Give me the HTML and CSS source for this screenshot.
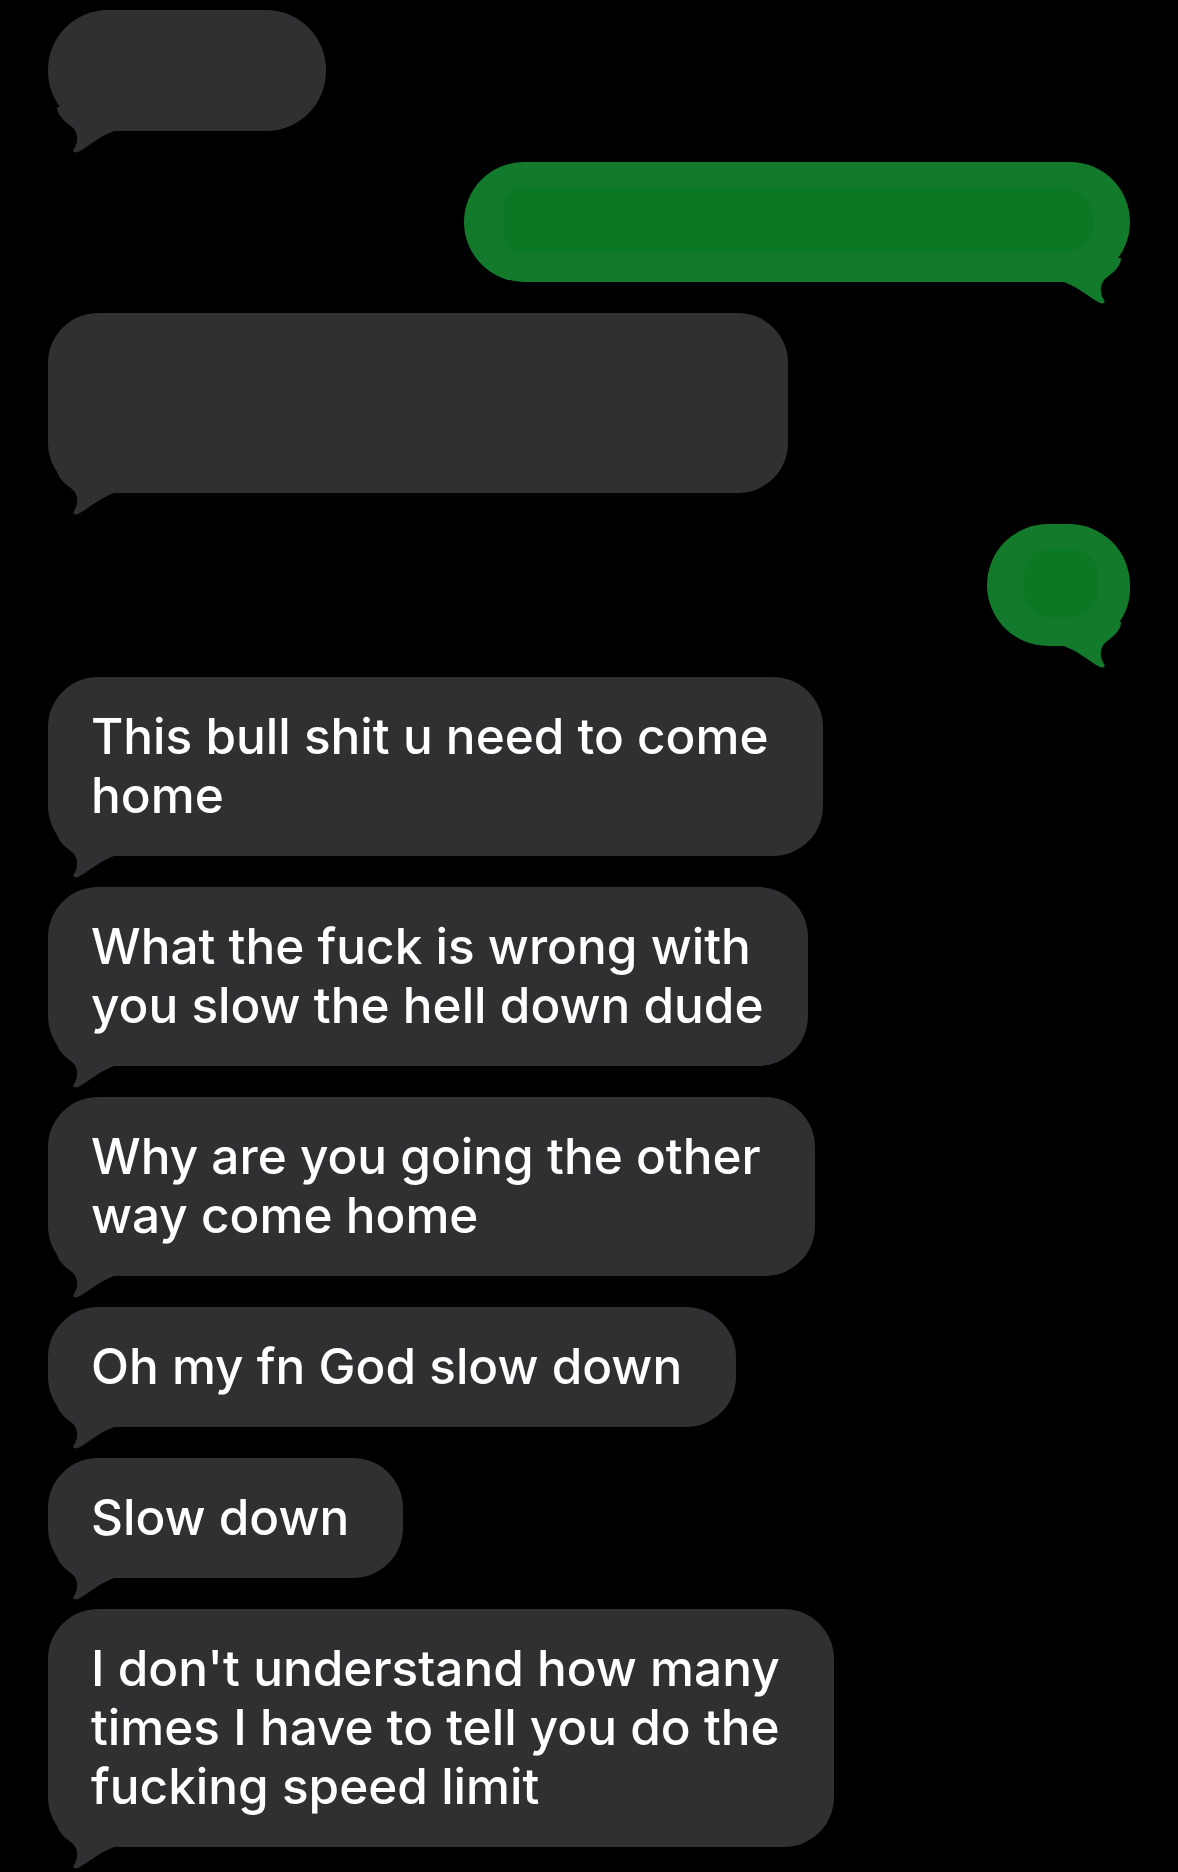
FILE: index.html
```html
<!DOCTYPE html>
<html lang="en">
<head>
<meta charset="utf-8">
<title>Messages</title>
<link rel="stylesheet" href="styles.css">
</head>
<body>
<main class="thread">
  <div class="row row-in">
    <div class="bubble in blank blank-1">
      <svg class="tail" viewBox="0 0 70 46" aria-hidden="true"><path d="M9 0C9 8 16 14 24 20C30 25 31 34 26 42C24 45 27 46 30 45C40 40 50 30 66 24L66 0Z"/></svg>
    </div>
  </div>
  <div class="row row-out">
    <div class="bubble out blank blank-2">
      <div class="scribble scribble-wide"></div>
      <svg class="tail" viewBox="0 0 70 46" aria-hidden="true"><path d="M9 0C9 8 16 14 24 20C30 25 31 34 26 42C24 45 27 46 30 45C40 40 50 30 66 24L66 0Z"/></svg>
    </div>
  </div>
  <div class="row row-in">
    <div class="bubble in blank blank-3">
      <svg class="tail" viewBox="0 0 70 46" aria-hidden="true"><path d="M9 0C9 8 16 14 24 20C30 25 31 34 26 42C24 45 27 46 30 45C40 40 50 30 66 24L66 0Z"/></svg>
    </div>
  </div>
  <div class="row row-out">
    <div class="bubble out blank blank-4">
      <div class="scribble scribble-small"></div>
      <svg class="tail" viewBox="0 0 70 46" aria-hidden="true"><path d="M9 0C9 8 16 14 24 20C30 25 31 34 26 42C24 45 27 46 30 45C40 40 50 30 66 24L66 0Z"/></svg>
    </div>
  </div>
  <div class="row row-in">
    <div class="bubble in text">This bull shit u need to come<br>home
      <svg class="tail" viewBox="0 0 70 46" aria-hidden="true"><path d="M9 0C9 8 16 14 24 20C30 25 31 34 26 42C24 45 27 46 30 45C40 40 50 30 66 24L66 0Z"/></svg>
    </div>
  </div>
  <div class="row row-in">
    <div class="bubble in text text-tight">What the fuck is wrong with<br>you slow the hell down dude
      <svg class="tail" viewBox="0 0 70 46" aria-hidden="true"><path d="M9 0C9 8 16 14 24 20C30 25 31 34 26 42C24 45 27 46 30 45C40 40 50 30 66 24L66 0Z"/></svg>
    </div>
  </div>
  <div class="row row-in">
    <div class="bubble in text">Why are you going the other<br>way come home
      <svg class="tail" viewBox="0 0 70 46" aria-hidden="true"><path d="M9 0C9 8 16 14 24 20C30 25 31 34 26 42C24 45 27 46 30 45C40 40 50 30 66 24L66 0Z"/></svg>
    </div>
  </div>
  <div class="row row-in">
    <div class="bubble in text">Oh my fn God slow down
      <svg class="tail" viewBox="0 0 70 46" aria-hidden="true"><path d="M9 0C9 8 16 14 24 20C30 25 31 34 26 42C24 45 27 46 30 45C40 40 50 30 66 24L66 0Z"/></svg>
    </div>
  </div>
  <div class="row row-in">
    <div class="bubble in text">Slow down
      <svg class="tail" viewBox="0 0 70 46" aria-hidden="true"><path d="M9 0C9 8 16 14 24 20C30 25 31 34 26 42C24 45 27 46 30 45C40 40 50 30 66 24L66 0Z"/></svg>
    </div>
  </div>
  <div class="row row-in">
    <div class="bubble in text">I don't understand how many<br>times I have to tell you do the<br>fucking speed limit
      <svg class="tail" viewBox="0 0 70 46" aria-hidden="true"><path d="M9 0C9 8 16 14 24 20C30 25 31 34 26 42C24 45 27 46 30 45C40 40 50 30 66 24L66 0Z"/></svg>
    </div>
  </div>
</main>
</body>
</html>
```
FILE: styles.css
```css
html, body {
  margin: 0;
  padding: 0;
  background: #000;
}

body {
  font-family: Inter, "Noto Sans", "Liberation Sans", sans-serif;
  color: #fff;
  -webkit-font-smoothing: antialiased;
}

.thread {
  display: flex;
  flex-direction: column;
  gap: 31px;
  padding: 10px 48px 40px 48px;
}

.row {
  display: flex;
}

.row-in {
  justify-content: flex-start;
}

.row-out {
  justify-content: flex-end;
}

.bubble {
  position: relative;
  border-radius: 50px;
  box-sizing: border-box;
}

.bubble.in {
  background: #303033;
  color: #fff;
}

.bubble.out {
  background: #13792b;
  color: #13792b;
}

.bubble.in .tail {
  fill: #303033;
  left: 0;
}

.bubble.out .tail {
  fill: #13792b;
  right: 0;
  transform: scaleX(-1);
}

.tail {
  position: absolute;
  bottom: -22px;
  width: 70px;
  height: 46px;
  display: block;
}

.text {
  padding: 30px 54px 31px 43px;
  font-size: 49.5px;
  line-height: 59px;
  font-weight: 500;
  letter-spacing: 0;
  white-space: nowrap;
}

.text-tight {
  padding-right: 44px;
}

.blank {
  display: flex;
  align-items: center;
  justify-content: center;
}

.blank-1 {
  width: 278px;
  height: 121px;
  border-radius: 60px;
}

.blank-2 {
  width: 666px;
  height: 120px;
  border-radius: 60px;
  padding: 22px 36px 26px 40px;
}

.blank-3 {
  width: 740px;
  height: 180px;
}

.blank-4 {
  width: 143px;
  height: 122px;
  border-radius: 62px 62px 58px 62px;
  padding: 22px 30px 26px 34px;
}

.scribble {
  background: #0b7824;
  position: relative;
  z-index: 1;
}

.scribble-wide {
  width: 100%;
  height: 66px;
  border-radius: 18px 34px 30px 16px;
}

.scribble-small {
  width: 74px;
  height: 68px;
  border-radius: 26px;
}
```
